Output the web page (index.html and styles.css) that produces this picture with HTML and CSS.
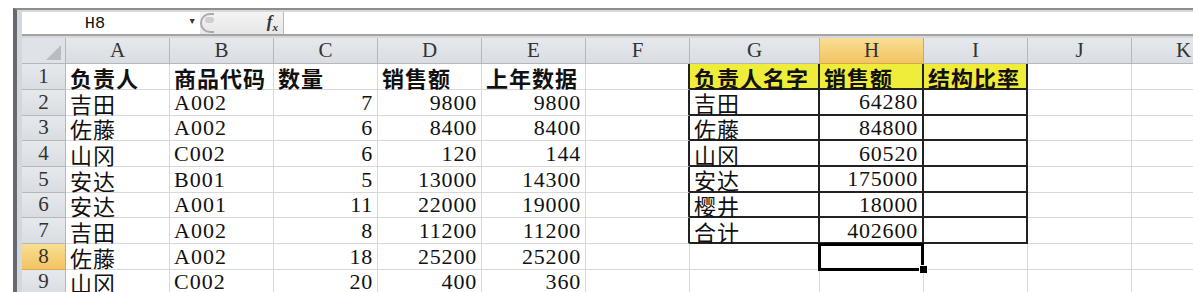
FILE: index.html
```html
<!DOCTYPE html>
<html lang="zh-CN">
<head>
  <meta charset="UTF-8">
  <title>销售额 结构比率</title>
  <link rel="stylesheet" href="styles.css">
</head>
<body>

  <div class="window">
    <div class="fbar">
      <div class="namebox">H8<span class="drop">&#9662;</span></div>
      <div class="fxzone">
        <span class="grip"><span class="knob"></span></span>
        <span class="fx">f<sub>x</sub></span>
      </div>
      <div class="finput"></div>
    </div>

    <div class="sheet">
      <div class="corner"><span class="tri"></span></div>
      <div class="ch">A</div><div class="ch">B</div><div class="ch">C</div><div class="ch">D</div>
      <div class="ch">E</div><div class="ch">F</div><div class="ch">G</div><div class="ch on">H</div>
      <div class="ch">I</div><div class="ch">J</div><div class="ch">K</div>

      <div class="rh">1</div>
      <div class="c b">负责人</div><div class="c b">商品代码</div><div class="c b">数量</div><div class="c b">销售额</div>
      <div class="c b">上年数据</div><div class="c tl"></div>
      <div class="c b y t">负责人名字</div><div class="c b y t">销售额</div><div class="c b y t">结构比率</div>
      <div class="c"></div><div class="c"></div>

      <div class="rh">2</div>
      <div class="c">吉田</div><div class="c">A002</div><div class="c n">7</div><div class="c n">9800</div>
      <div class="c n">9800</div><div class="c tl"></div>
      <div class="c t">吉田</div><div class="c n t">64280</div><div class="c t"></div>
      <div class="c"></div><div class="c"></div>

      <div class="rh">3</div>
      <div class="c">佐藤</div><div class="c">A002</div><div class="c n">6</div><div class="c n">8400</div>
      <div class="c n">8400</div><div class="c tl"></div>
      <div class="c t">佐藤</div><div class="c n t">84800</div><div class="c t"></div>
      <div class="c"></div><div class="c"></div>

      <div class="rh">4</div>
      <div class="c">山冈</div><div class="c">C002</div><div class="c n">6</div><div class="c n">120</div>
      <div class="c n">144</div><div class="c tl"></div>
      <div class="c t">山冈</div><div class="c n t">60520</div><div class="c t"></div>
      <div class="c"></div><div class="c"></div>

      <div class="rh">5</div>
      <div class="c">安达</div><div class="c">B001</div><div class="c n">5</div><div class="c n">13000</div>
      <div class="c n">14300</div><div class="c tl"></div>
      <div class="c t">安达</div><div class="c n t">175000</div><div class="c t"></div>
      <div class="c"></div><div class="c"></div>

      <div class="rh">6</div>
      <div class="c">安达</div><div class="c">A001</div><div class="c n">11</div><div class="c n">22000</div>
      <div class="c n">19000</div><div class="c tl"></div>
      <div class="c t">樱井</div><div class="c n t">18000</div><div class="c t"></div>
      <div class="c"></div><div class="c"></div>

      <div class="rh">7</div>
      <div class="c">吉田</div><div class="c">A002</div><div class="c n">8</div><div class="c n">11200</div>
      <div class="c n">11200</div><div class="c tl"></div>
      <div class="c t">合计</div><div class="c n t">402600</div><div class="c t"></div>
      <div class="c"></div><div class="c"></div>

      <div class="rh on">8</div>
      <div class="c">佐藤</div><div class="c">A002</div><div class="c n">18</div><div class="c n">25200</div>
      <div class="c n">25200</div><div class="c"></div>
      <div class="c"></div><div class="c sel"></div><div class="c"></div>
      <div class="c"></div><div class="c"></div>

      <div class="rh">9</div>
      <div class="c">山冈</div><div class="c">C002</div><div class="c n">20</div><div class="c n">400</div>
      <div class="c n">360</div><div class="c"></div>
      <div class="c"></div><div class="c"></div><div class="c"></div>
      <div class="c"></div><div class="c"></div>
    </div>
  </div>

</body>
</html>
```

FILE: styles.css
```css
* {
  box-sizing: border-box;
}

body {
  margin: 0;
  padding: 0;
  background: #fff;
  width: 1193px;
  height: 292px;
  overflow: hidden;
  font-family: "Liberation Serif", "Noto Sans CJK SC", serif;
  color: #111;
}

.window {
  margin: 8px 0 0 13px;
  border-top: 2px solid #8d8d8d;
  border-left: 4px solid #666a70;
  padding-left: 5px;
  background: #d3d8de;
  height: 284px;
  overflow: hidden;
}

/* formula bar */
.fbar {
  display: flex;
  height: 26px;
  border-top: 2px solid #d8d8d8;
  border-bottom: 2px solid #a4a4a4;
  background: #fff;
}

.namebox {
  width: 178px;
  position: relative;
  display: flex;
  align-items: center;
  justify-content: center;
  padding-right: 32px;
  font-family: "Liberation Mono", monospace;
  font-size: 17px;
  color: #111;
}

.drop {
  position: absolute;
  right: 4px;
  top: 1px;
  font-size: 13px;
  color: #333;
}

.fxzone {
  width: 84px;
  display: flex;
  align-items: center;
  justify-content: space-between;
  padding-right: 5px;
  background: linear-gradient(#f4f4f4, #e6e6e6);
  border-right: 1px solid #b8b8b8;
}

.grip {
  position: relative;
  width: 14px;
  height: 20px;
  border: 2px solid #aaa;
  border-right: none;
  border-radius: 12px 0 0 12px;
}

.knob {
  position: absolute;
  left: 3px;
  top: 2px;
  width: 9px;
  height: 6px;
  border-radius: 5px;
  background: #cfcfcf;
}

.fx {
  font-style: italic;
  font-weight: 700;
  font-size: 17px;
  color: #333;
}

.fx sub {
  font-size: 11px;
}

.finput {
  flex: 1;
  background: #fff;
}

/* grid */
.sheet {
  margin-top: 2px;
  display: grid;
  grid-template-columns: 44px repeat(6, 104px) 130px repeat(4, 104px);
  grid-template-rows: 26px 26px repeat(8, 25.67px);
  background: #fff;
}

.corner {
  background: #dfe2e6;
  border-right: 1px solid #b4b8be;
  border-bottom: 1px solid #b4b8be;
  position: relative;
}

.tri {
  position: absolute;
  right: 4px;
  bottom: 3px;
  width: 0;
  height: 0;
  border-left: 15px solid transparent;
  border-bottom: 15px solid #b9bcc1;
}

.ch,
.rh {
  display: flex;
  align-items: center;
  justify-content: center;
  background: linear-gradient(#e6e9ec, #d9dde2);
  border-right: 1px solid #b4b8be;
  border-bottom: 1px solid #b4b8be;
  font-size: 21px;
  color: #333;
}

.ch.on,
.rh.on {
  background: linear-gradient(#f9de93, #f1c462);
  border-color: #d9a84a;
}

.c {
  display: flex;
  align-items: center;
  padding: 1px 4px 0 4px;
  border-right: 1px solid #d8d8d8;
  border-bottom: 1px solid #d8d8d8;
  font-size: 22px;
  letter-spacing: 1px;
  white-space: nowrap;
}

.c.n {
  justify-content: flex-end;
  padding-right: 4px;
  letter-spacing: 0.8px;
}

.c.b {
  font-weight: 700;
}

.c.y {
  background: #f0ec3a;
}

.c.t {
  border-right: 2px solid #222;
  border-bottom: 2px solid #222;
}

.c.tl {
  border-right: 2px solid #222;
}

.c.sel {
  position: relative;
}

.c.sel::after {
  content: "";
  position: absolute;
  left: -2px;
  top: -1px;
  right: -1px;
  bottom: -2px;
  border: 3px solid #000;
}

.c.sel::before {
  content: "";
  position: absolute;
  right: -5px;
  bottom: -5px;
  width: 7px;
  height: 7px;
  background: #000;
  border: 1px solid #fff;
  z-index: 1;
}
```
